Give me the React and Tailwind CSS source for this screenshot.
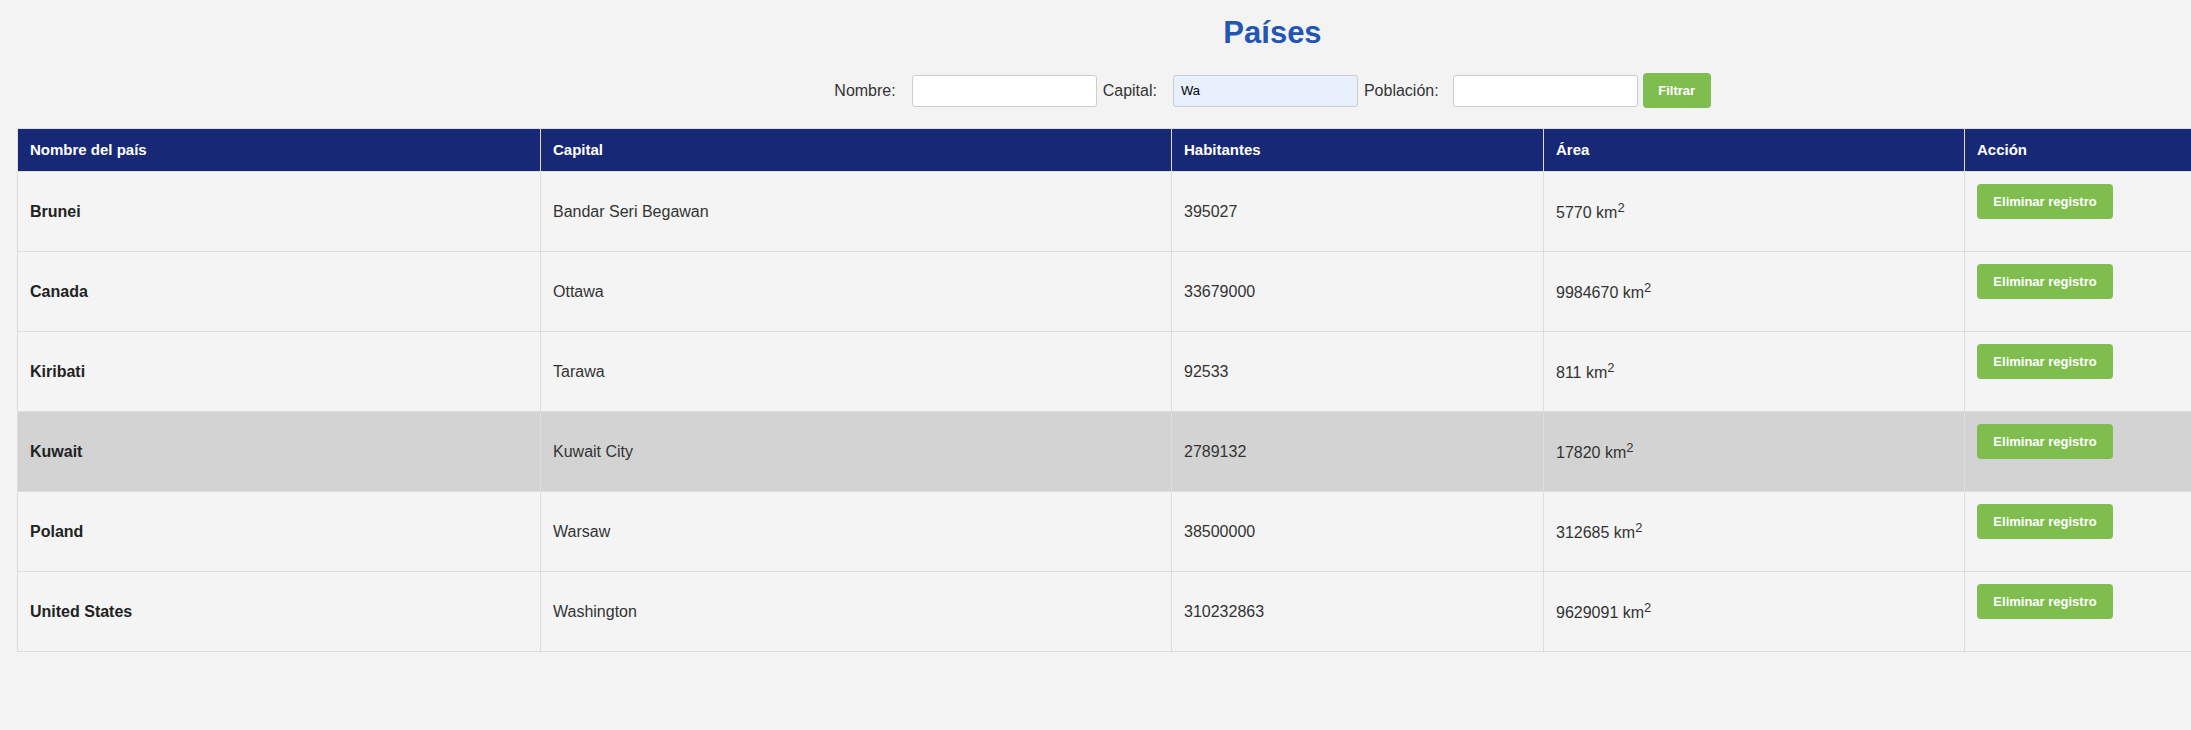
import { useState } from 'react';

const countries = [
  { name: 'Brunei', capital: 'Bandar Seri Begawan', population: 395027, area: 5770 },
  { name: 'Canada', capital: 'Ottawa', population: 33679000, area: 9984670 },
  { name: 'Kiribati', capital: 'Tarawa', population: 92533, area: 811 },
  { name: 'Kuwait', capital: 'Kuwait City', population: 2789132, area: 17820 },
  { name: 'Poland', capital: 'Warsaw', population: 38500000, area: 312685 },
  { name: 'United States', capital: 'Washington', population: 310232863, area: 9629091 },
];

export default function App() {
  const [filters, setFilters] = useState({ nombre: '', capital: 'Wa', poblacion: '' });
  const hovered = 'Kuwait';

  return (
    <div className="w-full min-h-screen overflow-hidden bg-[#f3f3f3] font-['Liberation_Sans',Arial,sans-serif] text-[#333]">
      <div className="w-[2545px]">
        <h1 className="pt-[15px] text-center text-[31px] leading-[36px] font-bold text-[#2356b2]">Países</h1>

        <div className="mt-[22px] flex items-center justify-center text-[16px]">
          <label className="mr-4">Nombre:</label>
          <input
            value={filters.nombre}
            onChange={e => setFilters({ ...filters, nombre: e.target.value })}
            className="mr-[6px] h-[32px] w-[185px] rounded-[3px] border border-[#cccccc] bg-white px-[7px] text-[13px] outline-none"
          />
          <label className="mr-4">Capital:</label>
          <input
            value={filters.capital}
            onChange={e => setFilters({ ...filters, capital: e.target.value })}
            className="mr-[6px] h-[32px] w-[185px] rounded-[3px] border border-[#cccccc] bg-[#e8f0fe] px-[7px] text-[13px] text-black outline-none"
          />
          <label className="mr-[14px]">Población:</label>
          <input
            value={filters.poblacion}
            onChange={e => setFilters({ ...filters, poblacion: e.target.value })}
            className="mr-[5px] h-[32px] w-[185px] rounded-[3px] border border-[#cccccc] bg-white px-[7px] text-[13px] outline-none"
          />
          <button className="h-[35px] w-[68px] rounded-[4px] bg-[#7fbd4f] text-[13px] font-bold text-white">Filtrar</button>
        </div>

        <div className="mt-[20px] px-[17px]">
          <table className="w-full table-fixed border-collapse border border-[#dddddd]">
            <colgroup>
              <col className="w-[523px]" />
              <col className="w-[631px]" />
              <col className="w-[372px]" />
              <col className="w-[421px]" />
              <col />
            </colgroup>
            <thead>
              <tr className="h-[43px] bg-[#172876] text-left text-[15px] font-bold text-white">
                <th className="border border-[#dddddd] px-3">Nombre del país</th>
                <th className="border border-[#dddddd] px-3">Capital</th>
                <th className="border border-[#dddddd] px-3">Habitantes</th>
                <th className="border border-[#dddddd] px-3">Área</th>
                <th className="border border-[#dddddd] px-3">Acción</th>
              </tr>
            </thead>
            <tbody>
              {countries.map(c => (
                <tr key={c.name} className={`h-[80px] text-[16px] ${c.name === hovered ? 'bg-[#d3d3d3]' : 'bg-[#f4f4f4]'}`}>
                  <td className="border border-[#dddddd] px-3 align-middle font-bold text-[#222]">{c.name}</td>
                  <td className="border border-[#dddddd] px-3 align-middle">{c.capital}</td>
                  <td className="border border-[#dddddd] px-3 align-middle">{c.population}</td>
                  <td className="border border-[#dddddd] px-3 align-middle">
                    {c.area} km<sup className="relative top-0 align-super text-[13px] leading-normal">2</sup>
                  </td>
                  <td className="border border-[#dddddd] px-3 pt-3 align-top">
                    <button className="h-[35px] w-[136px] rounded-[4px] bg-[#7fbd4f] text-[13px] font-bold text-white">Eliminar registro</button>
                  </td>
                </tr>
              ))}
            </tbody>
          </table>
        </div>
      </div>
    </div>
  );
}
